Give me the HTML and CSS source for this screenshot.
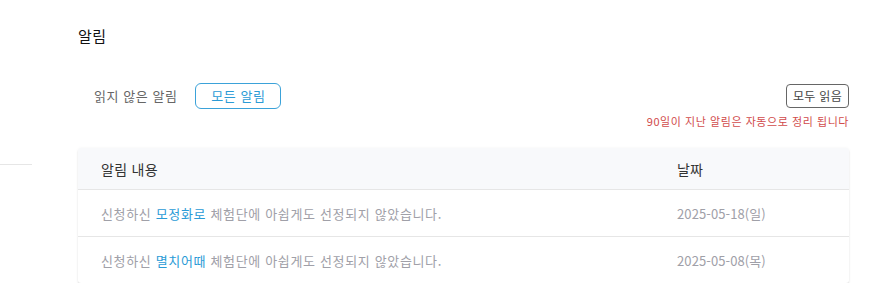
FILE: index.html
```html
<!DOCTYPE html>
<html lang="ko">
<head>
<meta charset="utf-8">
<title>알림</title>
<link rel="stylesheet" href="styles.css">
</head>
<body>
<div class="page">
  <aside class="side"><div class="side-line"></div></aside>
  <main class="main">
    <h1 class="title">알림</h1>
    <div class="toolbar">
      <div class="tabs">
        <span class="tab">읽지 않은 알림</span>
        <span class="tab tab-active">모든 알림</span>
      </div>
      <div class="actions">
        <button class="read-all">모두 읽음</button>
        <p class="notice">90일이 지난 알림은 자동으로 정리 됩니다</p>
      </div>
    </div>
    <div class="table">
      <div class="row head">
        <div class="c-msg">알림 내용</div>
        <div class="c-date">날짜</div>
      </div>
      <div class="row">
        <div class="c-msg">신청하신 <span class="link">모정화로</span> 체험단에 아쉽게도 선정되지 않았습니다.</div>
        <div class="c-date">2025-05-18(일)</div>
      </div>
      <div class="row">
        <div class="c-msg">신청하신 <span class="link">멸치어때</span> 체험단에 아쉽게도 선정되지 않았습니다.</div>
        <div class="c-date">2025-05-08(목)</div>
      </div>
    </div>
  </main>
</div>
</body>
</html>
```
FILE: styles.css
```css
* { box-sizing: border-box; }
body {
  margin: 0;
  background: #fff;
  font-family: "Noto Sans CJK KR", "Noto Sans", sans-serif;
}
.page {
  display: flex;
  align-items: flex-start;
}
.side {
  width: 32px;
  padding-top: 164px;
}
.side-line {
  height: 1px;
  background: #e6e6e6;
}
.main {
  margin-left: 46px;
  width: 771px;
  padding-top: 23px;
}
.title {
  margin: 0;
  font-size: 15px;
  font-weight: 400;
  line-height: 26px;
  color: #111;
  letter-spacing: 0.5px;
}
.toolbar {
  display: flex;
  justify-content: space-between;
  align-items: flex-start;
  margin-top: 34px;
}
.tabs {
  display: flex;
  align-items: center;
  gap: 18px;
  padding-left: 16px;
}
.tab {
  font-size: 13px;
  color: #666;
  line-height: 24px;
  letter-spacing: 0.55px;
}
.tab-active {
  border: 1px solid #3ba2d9;
  border-radius: 6px;
  color: #2b9bd6;
  width: 86px;
  text-align: center;
}
.actions {
  display: flex;
  flex-direction: column;
  align-items: flex-end;
  padding-top: 1px;
}
.read-all {
  font-family: inherit;
  font-size: 12px;
  color: #444;
  background: #fff;
  border: 1px solid #666;
  border-radius: 4px;
  padding: 0 6px;
  height: 24px;
  line-height: 22px;
  letter-spacing: 0.3px;
}
.notice {
  margin: 5px 0 0;
  font-size: 11px;
  line-height: 16px;
  color: #d14b4b;
  letter-spacing: 0.55px;
}
.table {
  margin-top: 19px;
  background: #fff;
  border-radius: 3px;
  box-shadow: 0 2px 2px rgba(0,0,0,0.1), 0 0 3px rgba(0,0,0,0.05);
}
.row {
  display: flex;
  align-items: center;
  height: 47px;
  border-bottom: 1px solid #e6e6e6;
  font-size: 13px;
  color: #a0a0a8;
  letter-spacing: 0.65px;
}
.row:last-child {
  border-bottom: none;
  height: 46px;
}
.row.head {
  height: 42px;
  background: #f8f9fb;
  color: #333;
  font-size: 14px;
  letter-spacing: 0.3px;
  border-radius: 3px 3px 0 0;
}
.c-msg {
  flex: 1;
  padding-left: 23px;
}
.c-date {
  width: 172px;
  letter-spacing: 0.1px;
}
.link {
  color: #2b9bd6;
}
```
